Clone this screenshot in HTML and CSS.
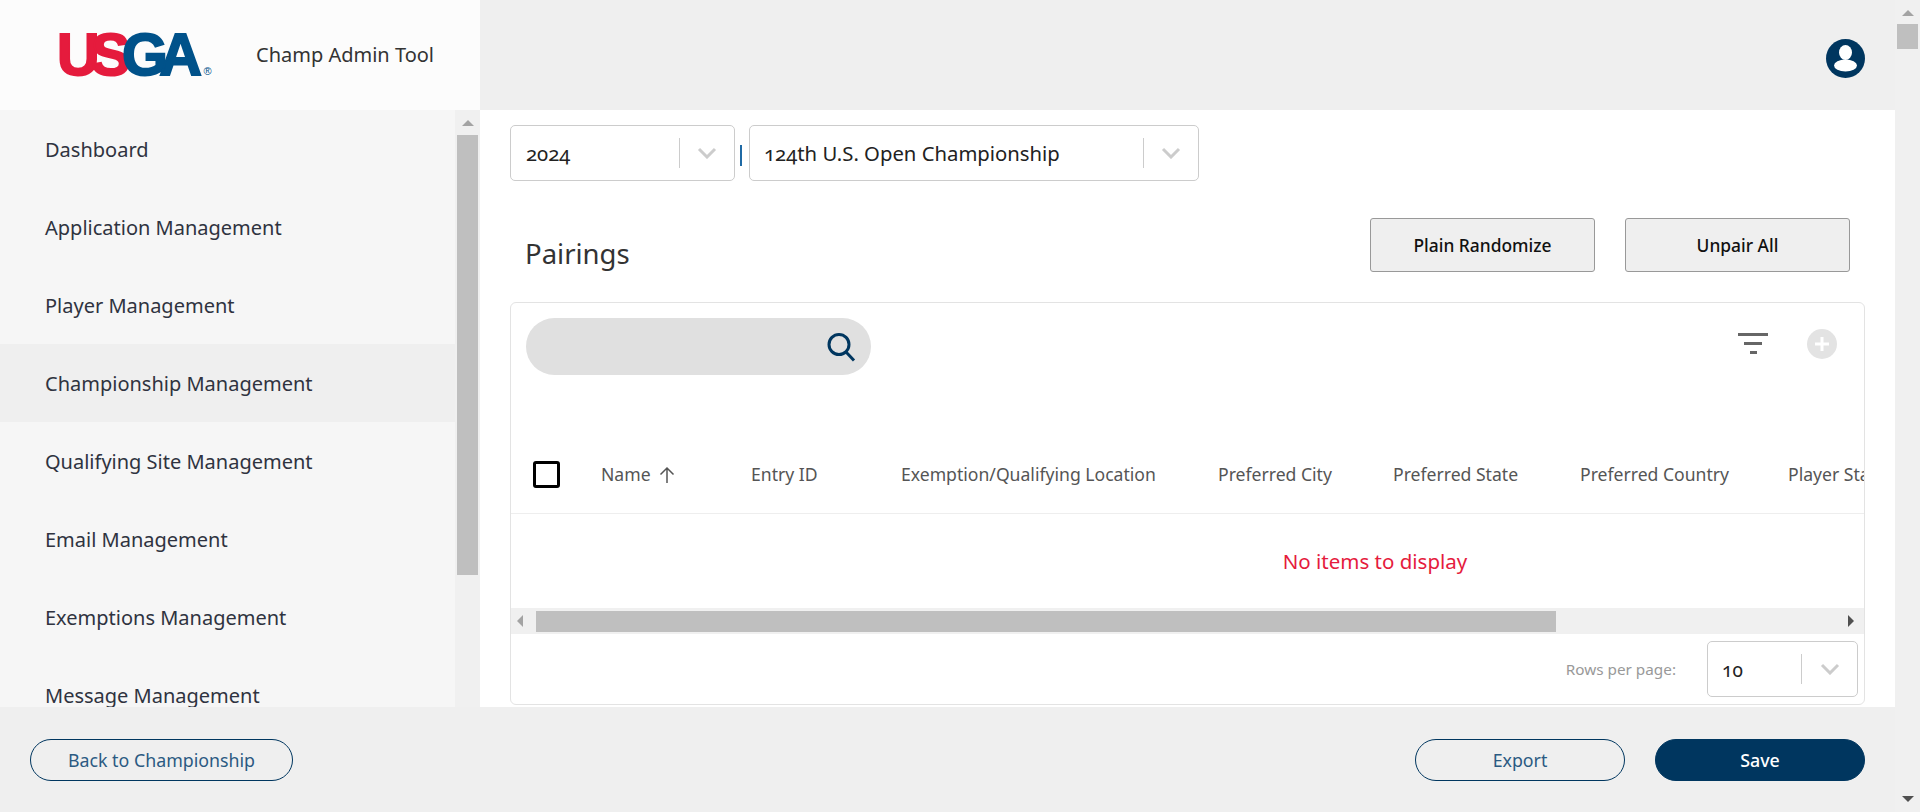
FILE: index.html
```html
<!DOCTYPE html>
<html>
<head>
<meta name="viewport" content="width=device-width, initial-scale=1">
<title>Champ Admin Tool</title>
<link rel="stylesheet" href="styles.css">
</head>
<body>
<div class="page">
  <!-- Start Header -->
  <header class="topbar">
    <div class="brand">
      <div class="logo"><span class="logo-red">US</span><span class="logo-blue">GA</span><span class="logo-reg">&reg;</span></div>
      <div class="brand-name">Champ Admin Tool</div>
    </div>
    <svg class="avatar" width="39" height="39" viewBox="0 0 39 39">
      <circle cx="19.5" cy="19.5" r="19.5" fill="#00365f"/>
      <ellipse cx="19.5" cy="13.5" rx="6.5" ry="7.5" fill="#fff"/>
      <ellipse cx="19.5" cy="26.5" rx="11.5" ry="6" fill="#fff"/>
    </svg>
  </header>
  <!-- End Header, Start Middle -->
  <div class="middle">
    <aside class="sidebar">
      <nav class="sidenav">
        <a href="#">Dashboard</a>
        <a href="#">Application Management</a>
        <a href="#">Player Management</a>
        <a href="#" class="active">Championship Management</a>
        <a href="#">Qualifying Site Management</a>
        <a href="#">Email Management</a>
        <a href="#">Exemptions Management</a>
        <a href="#">Message Management</a>
      </nav>
      <div class="vscroll side-scroll">
        <span class="arrow-up"></span>
        <span class="vthumb side-thumb"></span>
      </div>
    </aside>
    <main class="main">
      <div class="filters">
        <div class="select select-year">
          <span class="select-value">2024</span>
          <span class="select-arrow"><svg width="20" height="12" viewBox="0 0 20 12"><path d="M2 2l8 8 8-8" fill="none" stroke="#ccc" stroke-width="3"/></svg></span>
        </div>
        <span class="sep"></span>
        <div class="select select-champ">
          <span class="select-value">124th U.S. Open Championship</span>
          <span class="select-arrow"><svg width="20" height="12" viewBox="0 0 20 12"><path d="M2 2l8 8 8-8" fill="none" stroke="#ccc" stroke-width="3"/></svg></span>
        </div>
      </div>
      <div class="title-row">
        <h1>Pairings</h1>
        <div class="title-actions">
          <button class="btn-plain">Plain Randomize</button>
          <button class="btn-plain">Unpair All</button>
        </div>
      </div>
      <section class="card">
        <div class="toolbar">
          <div class="search">
            <svg width="32" height="32" viewBox="0 0 32 32"><circle cx="14" cy="13.5" r="10" fill="none" stroke="#00365f" stroke-width="3"/><path d="M21 21l8 8.500" fill="none" stroke="#00365f" stroke-width="3"/></svg>
          </div>
          <div class="tools">
            <div class="filter-icon"><span></span><span></span><span></span></div>
            <div class="add-icon"><svg width="30" height="30" viewBox="0 0 30 30"><circle cx="15" cy="15" r="15" fill="#e3e3e3"/><path d="M15 8v14M8 15h14" stroke="#fff" stroke-width="3"/></svg></div>
          </div>
        </div>
        <div class="table-wrap">
          <div class="table">
            <div class="table-head">
              <div class="cell-check"><span class="checkbox"></span></div>
              <div class="name-cell">Name <svg width="18" height="18" viewBox="0 0 18 18"><path d="M9 17V2M2.500 8.500L9 2l6.500 6.500" fill="none" stroke="#555" stroke-width="1.500"/></svg></div>
              <div>Entry ID</div>
              <div>Exemption/Qualifying Location</div>
              <div>Preferred City</div>
              <div>Preferred State</div>
              <div>Preferred Country</div>
              <div>Player Status</div>
            </div>
            <div class="table-empty">No items to display</div>
          </div>
        </div>
        <div class="hscroll">
          <span class="arrow-left"></span>
          <span class="hthumb"></span>
          <span class="arrow-right"></span>
        </div>
        <div class="pager">
          <span class="pager-label">Rows per page:</span>
          <div class="select select-rows">
            <span class="select-value">10</span>
            <span class="select-arrow"><svg width="20" height="12" viewBox="0 0 20 12"><path d="M2 2l8 8 8-8" fill="none" stroke="#ccc" stroke-width="3"/></svg></span>
          </div>
        </div>
      </section>
    </main>
  </div>
  <!-- End Middle, Start Footer -->
  <footer class="footer">
    <button class="btn-outline btn-back">Back to Championship</button>
    <div class="footer-right">
      <button class="btn-outline btn-wide">Export</button>
      <button class="btn-save btn-wide">Save</button>
    </div>
  </footer>
</div>
<div class="vscroll page-scroll">
  <span class="arrow-up"></span>
  <span class="vthumb page-thumb"></span>
  <span class="arrow-down"></span>
</div>
</body>
</html>
```

FILE: styles.css
```css
* {
  box-sizing: border-box;
}
body {
  margin: 0;
  height: 100vh;
  display: flex;
  overflow: hidden;
  font-family: "Noto Sans", sans-serif;
  color: #333;
  background-color: #efefef;
}
.page {
  flex: 1;
  min-width: 0;
  display: flex;
  flex-direction: column;
}
.topbar {
  height: 110px;
  flex: none;
  display: flex;
  align-items: center;
  justify-content: space-between;
  padding-right: 30px;
}
.brand {
  width: 480px;
  height: 100%;
  display: flex;
  align-items: center;
  padding-left: 57px;
  background-color: #fcfcfc;
}
.logo {
  width: 199px;
  margin-top: 15px;
  font-family: "Liberation Sans", sans-serif;
  font-weight: 700;
  font-size: 59px;
  line-height: 60px;
  letter-spacing: -8.5px;
  white-space: nowrap;
  -webkit-text-stroke: 2px currentColor;
}
.logo-red {
  color: #e51b3d;
}
.logo-blue {
  color: #00528a;
}
.logo-reg {
  margin-left: 10px;
  font-size: 11px;
  font-weight: 400;
  letter-spacing: 0;
  color: #00528a;
  -webkit-text-stroke: 0;
}
.brand-name {
  margin-bottom: 2px;
  font-size: 20px;
  color: #333;
}
.avatar {
  margin-top: 7px;
}
.middle {
  flex: 1;
  min-height: 0;
  display: flex;
}
.sidebar {
  width: 480px;
  flex: none;
  display: flex;
  background-color: #f6f6f6;
}
.sidenav {
  flex: 1;
  overflow: hidden;
}
.sidenav a {
  height: 78px;
  display: flex;
  align-items: center;
  padding-left: 45px;
  text-decoration: none;
  font-size: 20px;
  color: #2f3340;
}
.sidenav a.active {
  background-color: #efefef;
}
.vscroll {
  width: 25px;
  flex: none;
  display: flex;
  flex-direction: column;
  align-items: center;
  background-color: #f0f0f0;
}
.arrow-up, .arrow-down, .arrow-left, .arrow-right {
  width: 0;
  height: 0;
  flex: none;
  border-style: solid;
  border-color: transparent;
}
.arrow-up {
  margin: 10px 0 5px;
  border-width: 0 6px 6px;
  border-bottom-color: #a3a3a3;
}
.arrow-down {
  margin-top: auto;
  margin-bottom: 10px;
  border-width: 6px 6px 0;
  border-top-color: #505050;
}
.arrow-left {
  border-width: 6px 6px 6px 0;
  border-right-color: #a3a3a3;
}
.arrow-right {
  margin-left: auto;
  border-width: 6px 0 6px 6px;
  border-left-color: #505050;
}
.vthumb {
  width: 21px;
  flex: none;
  background-color: #bfbfbf;
}
.side-thumb {
  height: 440px;
  margin-top: 4px;
}
.page-thumb {
  height: 25px;
  margin-top: 3px;
}
.main {
  flex: 1;
  min-width: 0;
  overflow: hidden;
  padding: 15px 0 0 30px;
  background-color: #fff;
}
.filters {
  display: flex;
  align-items: center;
}
.select {
  height: 56px;
  display: flex;
  align-items: center;
  justify-content: space-between;
  background-color: #fff;
  border: 1px solid #ccc;
  border-radius: 5px;
}
.select-year {
  width: 225px;
  padding-left: 15px;
}
.select-champ {
  width: 450px;
  padding-left: 14px;
}
.select-rows {
  width: 151px;
  padding-left: 14px;
}
.select-value {
  font-size: 20.3px;
  color: #222;
  font-variant-numeric: oldstyle-nums;
}
.select-rows .select-value {
  margin-top: 2px;
  font-size: 19px;
}
.select-arrow {
  width: 55px;
  height: 30px;
  flex: none;
  display: flex;
  align-items: center;
  justify-content: center;
  border-left: 1px solid #ccc;
}
.select-rows .select-arrow {
  width: 56px;
}
.sep {
  width: 2px;
  height: 21px;
  margin: 4px 7px 0 5px;
  background-color: #1f6aa5;
}
.title-row {
  width: 1355px;
  display: flex;
  align-items: center;
  justify-content: space-between;
  margin-top: 37px;
  padding: 0 15px 0 15px;
}
h1 {
  margin: 16px 0 0;
  font-size: 27.5px;
  font-weight: 400;
  color: #333;
}
.title-actions {
  display: flex;
  gap: 30px;
}
.btn-plain {
  width: 225px;
  height: 54px;
  font-family: inherit;
  font-size: 17.4px;
  font-weight: 500;
  color: #111;
  background-color: #efefef;
  border: 1px solid #999;
  border-radius: 3px;
}
.card {
  width: 1355px;
  margin-top: 30px;
  background-color: #fff;
  border: 1px solid #e3e3e3;
  border-radius: 6px;
  overflow: hidden;
}
.toolbar {
  height: 134px;
  display: flex;
  justify-content: space-between;
  padding: 15px 27px 0 15px;
}
.search {
  width: 345px;
  height: 57px;
  display: flex;
  align-items: center;
  justify-content: flex-end;
  padding-right: 14px;
  background-color: #e0e0e0;
  border-radius: 29px;
}
.tools {
  display: flex;
  gap: 39px;
  padding-top: 11px;
}
.filter-icon {
  width: 30px;
  height: 30px;
  display: flex;
  flex-direction: column;
  align-items: center;
  gap: 6px;
  padding-top: 4px;
}
.filter-icon span {
  height: 3px;
  background-color: #666;
}
.filter-icon span:nth-child(1) {
  width: 30px;
}
.filter-icon span:nth-child(2) {
  width: 18px;
}
.filter-icon span:nth-child(3) {
  width: 7px;
}
.table-wrap {
  overflow: hidden;
}
.table {
  width: 1728px;
}
.table-head {
  height: 77px;
  display: grid;
  grid-template-columns: 90px 150px 150px 317px 175px 187px 208px 1fr;
  align-items: center;
  padding-bottom: 2px;
  font-size: 17.6px;
  color: #555;
  white-space: nowrap;
  border-bottom: 1px solid #eee;
}
.cell-check {
  padding-left: 22px;
  display: flex;
}
.checkbox {
  width: 27px;
  height: 27px;
  border: 3px solid #000;
  border-radius: 3px;
}
.name-cell svg {
  margin-left: 3px;
  vertical-align: -3px;
}
.table-empty {
  height: 94px;
  display: flex;
  align-items: center;
  justify-content: center;
  font-size: 20.5px;
  color: #e51b3d;
}
.hscroll {
  height: 26px;
  display: flex;
  align-items: center;
  padding: 0 10px 0 6px;
  background-color: #f0f0f0;
}
.hthumb {
  width: 1020px;
  height: 21px;
  margin-left: 13px;
  background-color: #bfbfbf;
}
.pager {
  height: 70px;
  display: flex;
  align-items: center;
  justify-content: flex-end;
  gap: 31px;
  padding: 0 6px 0 0;
}
.pager-label {
  font-size: 15.3px;
  color: #999;
}
.footer {
  height: 105px;
  flex: none;
  display: flex;
  justify-content: space-between;
  padding: 32px 30px 0;
}
.footer-right {
  display: flex;
  gap: 30px;
}
.btn-outline, .btn-save {
  height: 42px;
  font-family: inherit;
  font-size: 17.8px;
  border-radius: 21px;
  border: 1px solid #00365f;
}
.btn-outline {
  color: #2b5a82;
  background-color: transparent;
}
.btn-save {
  color: #fff;
  font-weight: 500;
  background-color: #00365f;
}
.btn-back {
  width: 263px;
}
.btn-wide {
  width: 210px;
}
```
